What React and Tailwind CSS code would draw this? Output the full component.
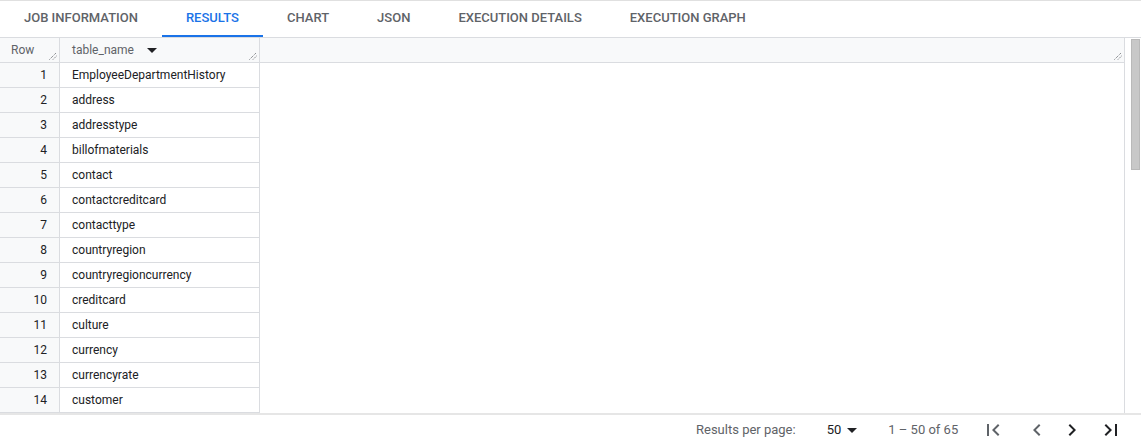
import React from "react";

const tabs = ["JOB INFORMATION", "RESULTS", "CHART", "JSON", "EXECUTION DETAILS", "EXECUTION GRAPH"];
const rows = [
  "EmployeeDepartmentHistory",
  "address",
  "addresstype",
  "billofmaterials",
  "contact",
  "contactcreditcard",
  "contacttype",
  "countryregion",
  "countryregioncurrency",
  "creditcard",
  "culture",
  "currency",
  "currencyrate",
  "customer",
];

function Grip() {
  return (
    <svg width="8" height="8" viewBox="0 0 8 8" className="absolute right-[2px] bottom-[2px]">
      <path d="M0.5 7.5 L7.5 0.5" stroke="#5f6368" strokeWidth="1" strokeDasharray="1 1" />
      <path d="M4 7.5 L7.5 4" stroke="#5f6368" strokeWidth="1" strokeDasharray="1 1" />
    </svg>
  );
}

function Icon({ d, color, className }) {
  return (
    <svg width="24" height="24" viewBox="0 0 24 24" className={className}>
      <path d={d} fill={color} />
    </svg>
  );
}

export default function App() {
  return (
    <div
      className="w-[1141px] h-[445px] bg-white border-t border-[#e0e0e0] flex flex-col overflow-hidden"
      style={{ fontFamily: "Roboto, 'Liberation Sans', sans-serif" }}
    >
      {/* Tabs */}
      <div className="h-[37px] flex border-b border-[#dadce0] shrink-0 pl-[-1px]">
        {tabs.map((t) => {
          const active = t === "RESULTS";
          return (
            <div
              key={t}
              className={
                "px-6 h-full flex items-center text-[13px] font-medium border-b-2 " +
                (active ? "text-[#1a73e8] border-[#1a73e8]" : "text-[#5f6368] border-transparent")
              }
            >
              {t}
            </div>
          );
        })}
      </div>

      {/* Table area */}
      <div className="flex h-[375px] shrink-0">
        <div className="w-[1125px] border-r border-[#dadce0] flex flex-col">
          {/* Header */}
          <div className="h-[25px] flex bg-[#f8f9fa] border-b border-[#dadce0] text-[12px] text-[#5f6368] shrink-0">
            <div className="relative w-[60px] border-r border-[#dadce0] flex items-center pl-[11px]">
              Row
              <Grip />
            </div>
            <div className="relative w-[200px] border-r border-[#dadce0] flex items-center pl-[12px]">
              table_name
              <svg width="10" height="5" viewBox="0 0 10 5" className="ml-[13px]">
                <path d="M0 0 L10 0 L5 5 Z" fill="#202124" />
              </svg>
              <Grip />
            </div>
            <div className="relative flex-1">
              <Grip />
            </div>
          </div>
          {/* Rows */}
          <div className="flex flex-col">
            {rows.map((r, i) => (
              <div key={r} className="flex h-[25px] text-[12px] text-[#202124]">
                <div className="w-[60px] bg-[#f8f9fa] border-r border-b border-[#dadce0] flex items-center justify-end pr-[12px]">
                  {i + 1}
                </div>
                <div className="w-[200px] border-r border-b border-[#dadce0] flex items-center pl-[12px]">
                  {r}
                </div>
              </div>
            ))}
          </div>
        </div>
        {/* Scrollbar */}
        <div className="w-[16px] pl-[6px] pt-[1px]">
          <div className="w-[9px] h-[131px] bg-[#c8c8c8] border border-[#b9b9b9]" />
        </div>
      </div>

      {/* Footer */}
      <div className="flex-1 border-t-2 border-[#e6e6e6] flex items-center text-[13px] text-[#5f6368]">
        <div className="ml-[696px]">Results per page:</div>
        <div className="ml-[31px] flex items-center text-[#202124]">
          50
          <svg width="10" height="5" viewBox="0 0 10 5" className="ml-[6px]">
            <path d="M0 0 L10 0 L5 5 Z" fill="#202124" />
          </svg>
        </div>
        <div className="ml-[31px]">1 – 50 of 65</div>
        <Icon
          className="ml-[23px]"
          color="#5f6368"
          d="M18.41 16.59L13.82 12l4.59-4.59L17 6l-6 6 6 6zM6 6h2v12H6z"
        />
        <Icon
          className="ml-[20px]"
          color="#5f6368"
          d="M15.41 7.41L14 6l-6 6 6 6 1.41-1.41L10.83 12z"
        />
        <Icon
          className="ml-[11px]"
          color="#202124"
          d="M10 6L8.59 7.41 13.17 12l-4.58 4.59L10 18l6-6z"
        />
        <Icon
          className="ml-[15px]"
          color="#202124"
          d="M5.59 7.41L10.18 12l-4.59 4.59L7 18l6-6-6-6zM16 6h2v12h-2z"
        />
      </div>
    </div>
  );
}
